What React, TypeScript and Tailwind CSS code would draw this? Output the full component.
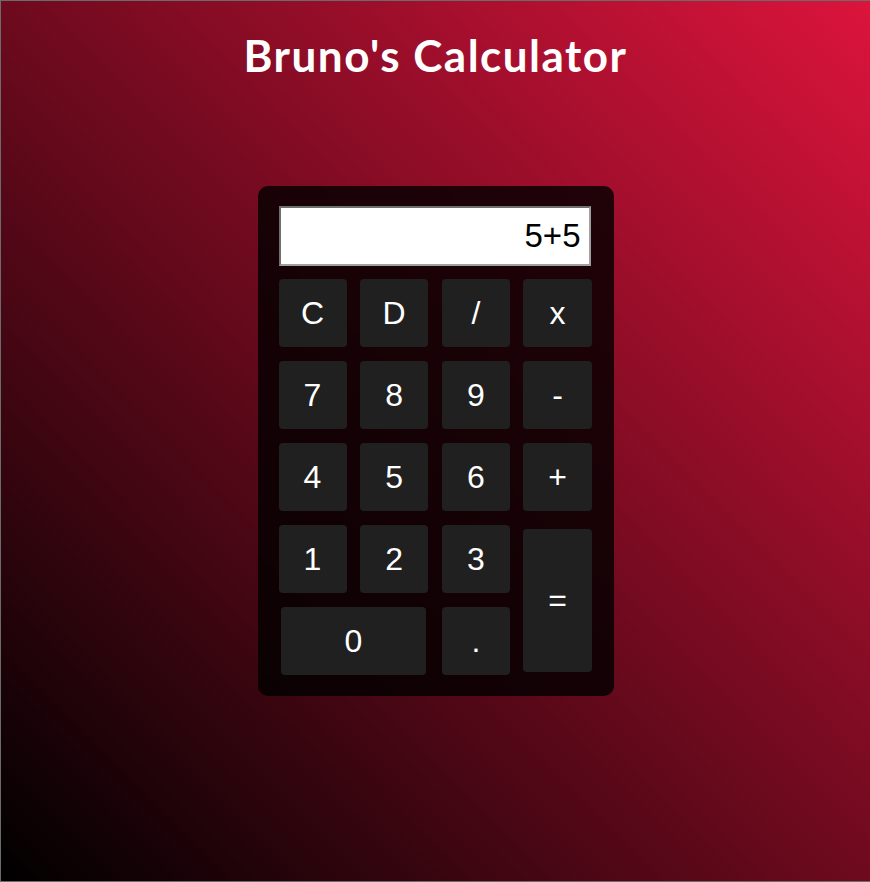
import React from "react";

const btn =
  "bg-[#202020] rounded-[4px] text-white flex items-center justify-center text-[32px] leading-none";

export default function App() {
  const rows1 = [
    ["C", "D", "/", "x"],
    ["7", "8", "9", "-"],
    ["4", "5", "6", "+"],
  ];
  return (
    <div
      className="w-full h-[882px] border-t border-l border-b border-[#6b6b6b] bg-[linear-gradient(to_top_right,#000000,#dc143c)] flex flex-col items-center"
      style={{ fontFamily: '"Liberation Sans", Arial, sans-serif' }}
    >
      <h1
        className="mt-[30px] text-white font-bold text-[44px] leading-[48px] tracking-[1.5px]"
        style={{ fontFamily: 'Lato, "Open Sans", sans-serif' }}
      >
        Bruno's Calculator
      </h1>
      <div className="mt-[107px] w-[356px] rounded-[10px] bg-black/80 pt-[20px] pb-[21px] pl-[21px] pr-[22px]">
        <div className="h-[60px] w-[312px] bg-white border-2 border-t-[#6f6f6f] border-l-[#6f6f6f] border-b-[#a0a0a0] border-r-[#a0a0a0] flex items-center justify-end pr-[8px] text-black text-[33px]">
          5+5
        </div>
        <div className="mt-[13px] w-[313px] grid grid-cols-4 gap-x-[13.67px] gap-y-[14px] auto-rows-[68px]">
          {rows1.flat().map((k) => (
            <button key={k} className={btn}>
              {k}
            </button>
          ))}
          <button className={btn}>1</button>
          <button className={btn}>2</button>
          <button className={btn}>3</button>
          <button className={`${btn} row-span-2 my-[3.5px]`}>=</button>
          <button className={`${btn} col-span-2 mx-[2px]`}>0</button>
          <button className={btn}>.</button>
        </div>
      </div>
    </div>
  );
}
